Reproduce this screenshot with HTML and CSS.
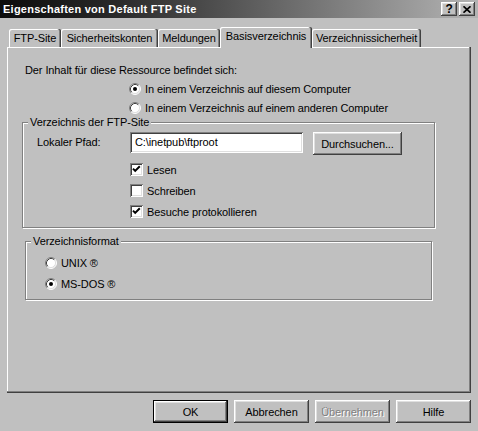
FILE: index.html
```html
<!DOCTYPE html>
<html lang="de">
<head>
<meta charset="utf-8">
<title>Eigenschaften von Default FTP Site</title>
<link rel="stylesheet" href="styles.css">
</head>
<body>
<div class="dialog">
  <div class="titlebar">
    <span class="title">Eigenschaften von Default FTP Site</span>
    <div class="caption-btns">
      <span class="cap-btn help">?</span>
      <span class="cap-btn close"><svg width="8" height="7" viewBox="0 0 8 7"><path d="M0.5 0.3 L7.5 6.7 M7.5 0.3 L0.5 6.7" stroke="#000" stroke-width="1.7" fill="none"/></svg></span>
    </div>
  </div>

  <div class="tabs">
    <div class="tab t-ftp">FTP-Site</div>
    <div class="tab t-sec">Sicherheitskonten</div>
    <div class="tab t-msg">Meldungen</div>
    <div class="tab t-base selected">Basisverzeichnis</div>
    <div class="tab t-dirsec">Verzeichnissicherheit</div>
  </div>

  <div class="panel">
    <p class="intro">Der Inhalt für diese Ressource befindet sich:</p>
    <div class="opt-list">
      <div class="radio-row">
        <svg class="radio" width="12" height="12" viewBox="0 0 12 12"><circle cx="6" cy="6" r="5" fill="#fff"/><path d="M2.11 9.89 A5.5 5.5 0 0 1 9.89 2.11" stroke="#808080" fill="none"/><path d="M9.89 2.11 A5.5 5.5 0 0 1 2.11 9.89" stroke="#fff" fill="none"/><path d="M2.82 9.18 A4.5 4.5 0 0 1 9.18 2.82" stroke="#404040" fill="none"/><path d="M9.18 2.82 A4.5 4.5 0 0 1 2.82 9.18" stroke="#dfdfdf" fill="none"/><circle cx="6" cy="6" r="2" fill="#000"/></svg>
        <span>In einem Verzeichnis auf diesem Computer</span>
      </div>
      <div class="radio-row">
        <svg class="radio" width="12" height="12" viewBox="0 0 12 12"><circle cx="6" cy="6" r="5" fill="#fff"/><path d="M2.11 9.89 A5.5 5.5 0 0 1 9.89 2.11" stroke="#808080" fill="none"/><path d="M9.89 2.11 A5.5 5.5 0 0 1 2.11 9.89" stroke="#fff" fill="none"/><path d="M2.82 9.18 A4.5 4.5 0 0 1 9.18 2.82" stroke="#404040" fill="none"/><path d="M9.18 2.82 A4.5 4.5 0 0 1 2.82 9.18" stroke="#dfdfdf" fill="none"/></svg>
        <span>In einem Verzeichnis auf einem anderen Computer</span>
      </div>
    </div>

    <div class="group g-site">
      <span class="legend">Verzeichnis der FTP-Site</span>
      <div class="path-row">
        <span class="path-label">Lokaler Pfad:</span>
        <span class="edit">C:\inetpub\ftproot</span>
        <span class="btn browse">Durchsuchen...</span>
      </div>
      <div class="checks">
        <div class="check-row">
          <span class="cbox"><svg width="13" height="13" viewBox="0 0 13 13"><polyline points="3,5.6 5.2,7.9 9.8,3.3" stroke="#000" stroke-width="2" fill="none"/></svg></span>
          <span>Lesen</span>
        </div>
        <div class="check-row">
          <span class="cbox"></span>
          <span>Schreiben</span>
        </div>
        <div class="check-row">
          <span class="cbox"><svg width="13" height="13" viewBox="0 0 13 13"><polyline points="3,5.6 5.2,7.9 9.8,3.3" stroke="#000" stroke-width="2" fill="none"/></svg></span>
          <span>Besuche protokollieren</span>
        </div>
      </div>
    </div>

    <div class="group g-format">
      <span class="legend">Verzeichnisformat</span>
      <div class="radio-row fmt">
        <svg class="radio" width="12" height="12" viewBox="0 0 12 12"><circle cx="6" cy="6" r="5" fill="#fff"/><path d="M2.11 9.89 A5.5 5.5 0 0 1 9.89 2.11" stroke="#808080" fill="none"/><path d="M9.89 2.11 A5.5 5.5 0 0 1 2.11 9.89" stroke="#fff" fill="none"/><path d="M2.82 9.18 A4.5 4.5 0 0 1 9.18 2.82" stroke="#404040" fill="none"/><path d="M9.18 2.82 A4.5 4.5 0 0 1 2.82 9.18" stroke="#dfdfdf" fill="none"/></svg>
        <span>UNIX ®</span>
      </div>
      <div class="radio-row fmt">
        <svg class="radio" width="12" height="12" viewBox="0 0 12 12"><circle cx="6" cy="6" r="5" fill="#fff"/><path d="M2.11 9.89 A5.5 5.5 0 0 1 9.89 2.11" stroke="#808080" fill="none"/><path d="M9.89 2.11 A5.5 5.5 0 0 1 2.11 9.89" stroke="#fff" fill="none"/><path d="M2.82 9.18 A4.5 4.5 0 0 1 9.18 2.82" stroke="#404040" fill="none"/><path d="M9.18 2.82 A4.5 4.5 0 0 1 2.82 9.18" stroke="#dfdfdf" fill="none"/><circle cx="6" cy="6" r="2" fill="#000"/></svg>
        <span>MS-DOS ®</span>
      </div>
    </div>
  </div>

  <div class="buttons">
    <span class="btn default">OK</span>
    <span class="btn">Abbrechen</span>
    <span class="btn disabled">Übernehmen</span>
    <span class="btn">Hilfe</span>
  </div>
</div>
</body>
</html>
```

FILE: styles.css
```css
* { box-sizing: border-box; }
html, body { margin: 0; padding: 0; }
body {
  width: 478px;
  height: 431px;
  overflow: hidden;
  background: #c0c0c0;
  font-family: "Liberation Sans", Arial, sans-serif;
  font-size: 11px;
  letter-spacing: -0.1px;
  color: #000;
}
.dialog { width: 478px; height: 431px; }

/* title bar */
.titlebar {
  height: 18px;
  display: flex;
  align-items: center;
  justify-content: space-between;
  padding: 0 3px;
  background: linear-gradient(90deg, #0c0c0c 0%, #2a2a2a 25%, #b4b4b4 100%);
}
.title {
  color: #fff;
  font-weight: bold;
  letter-spacing: 0.25px;
  line-height: 18px;
}
.caption-btns { display: flex; gap: 2px; }
.cap-btn {
  width: 16px;
  height: 14px;
  display: flex;
  align-items: center;
  justify-content: center;
  background: #c0c0c0;
  box-shadow: inset -1px -1px #404040, inset 1px 1px #fff, inset -2px -2px #808080, inset 2px 2px #dfdfdf;
  font-weight: bold;
  font-size: 12px;
  line-height: 14px;
}
.cap-btn.help { padding-bottom: 1px; }

/* tabs */
.tabs {
  display: flex;
  align-items: flex-end;
  height: 20px;
  margin: 9px 0 0 9px;
}
.tab {
  height: 18px;
  line-height: 18px;
  text-align: center;
  white-space: nowrap;
  background: #c0c0c0;
  border-radius: 2px 2px 0 0;
  box-shadow: inset -1px 0 #404040, inset -2px 0 #808080, inset 1px 1px #fff;
}
.t-ftp { width: 52px; }
.t-sec { width: 97px; }
.t-msg { width: 62px; }
.t-base { width: 92px; }
.t-dirsec { width: 109px; }
.tab.selected {
  height: 21px;
  line-height: 19px;
  margin-bottom: -1px;
  position: relative;
  z-index: 1;
}

/* tab page */
.panel {
  margin-left: 7px;
  width: 464px;
  height: 346px;
  padding: 16px 0 0 15px;
  box-shadow: inset -1px -1px #404040, inset -2px -2px #808080, inset 1px 1px #fff;
}
.intro {
  margin: 0 0 2px 3px;
  line-height: 14px;
}
.radio-row {
  display: flex;
  align-items: center;
  gap: 4px;
  height: 19px;
  margin-left: 107px;
  white-space: nowrap;
}
.radio { flex: none; display: block; }

.group {
  position: relative;
  border: 1px solid #808080;
  box-shadow: inset 1px 1px #fff, 1px 1px #fff;
}
.legend {
  position: absolute;
  top: -8px;
  left: 5px;
  padding: 0 2px;
  line-height: 14px;
  background: #c0c0c0;
  white-space: nowrap;
}
.g-site {
  margin-top: 5px;
  width: 413px;
  height: 106px;
  padding: 9px 0 0 14px;
}
.path-row {
  display: flex;
  align-items: flex-start;
  height: 23px;
}
.path-label {
  width: 93px;
  line-height: 21px;
}
.edit {
  width: 173px;
  height: 21px;
  line-height: 21px;
  padding-left: 5px;
  background: #fff;
  box-shadow: inset 1px 1px #808080, inset -1px -1px #fff, inset 2px 2px #404040, inset -2px -2px #dfdfdf;
}
.checks {
  margin: 4px 0 0 93px;
}
.check-row {
  display: flex;
  align-items: center;
  gap: 4px;
  height: 21px;
}
.cbox {
  width: 13px;
  height: 13px;
  flex: none;
  background: #fff;
  box-shadow: inset 1px 1px #808080, inset -1px -1px #fff, inset 2px 2px #404040, inset -2px -2px #dfdfdf;
}
.cbox svg { display: block; }

.g-format {
  margin: 13px 0 0 3px;
  width: 407px;
  height: 59px;
  padding: 10px 0 0 19px;
}
.radio-row.fmt {
  margin-left: 0;
  height: 21px;
}

/* buttons */
.btn {
  width: 75px;
  height: 23px;
  display: flex;
  align-items: center;
  justify-content: center;
  background: #c0c0c0;
  white-space: nowrap;
  box-shadow: inset -1px -1px #404040, inset 1px 1px #fff, inset -2px -2px #808080, inset 2px 2px #dfdfdf;
}
.btn.browse {
  width: 89px;
  margin-left: 10px;
}
.btn.default { border: 1px solid #000; }
.btn.disabled {
  color: #808080;
  text-shadow: 1px 1px #fff;
}
.buttons {
  display: flex;
  gap: 6px;
  margin: 7px 0 0 153px;
}
```
